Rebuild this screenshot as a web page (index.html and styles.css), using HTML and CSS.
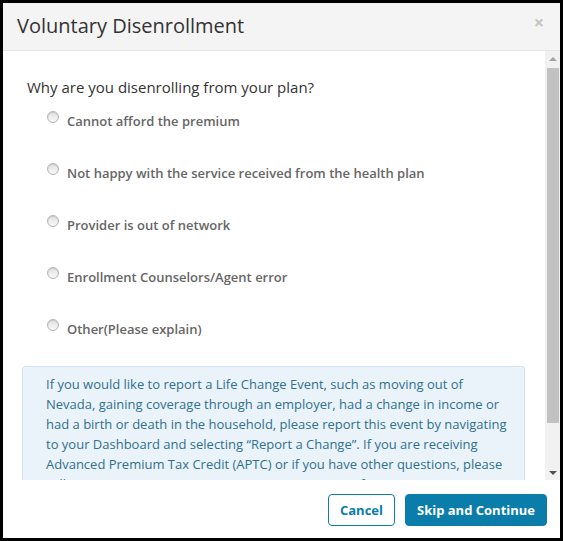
FILE: index.html
```html
<!DOCTYPE html>
<html>
<head>
<meta charset="utf-8">
<link rel="stylesheet" href="styles.css">
</head>
<body>
<div class="modal">
  <div class="modal-header">
    <h2 class="modal-title">Voluntary Disenrollment</h2>
    <span class="close">&times;</span>
  </div>
  <div class="modal-scroll">
    <div class="modal-body">
      <p class="question">Why are you disenrolling from your plan?</p>
      <ul class="options">
        <li><label><input type="radio" name="reason"><span>Cannot afford the premium</span></label></li>
        <li><label><input type="radio" name="reason"><span>Not happy with the service received from the health plan</span></label></li>
        <li><label><input type="radio" name="reason"><span>Provider is out of network</span></label></li>
        <li><label><input type="radio" name="reason"><span>Enrollment Counselors/Agent error</span></label></li>
        <li><label><input type="radio" name="reason"><span>Other(Please explain)</span></label></li>
      </ul>
      <div class="info">
        If you would like to report a Life Change Event, such as moving out of Nevada, gaining coverage through an employer, had a change in income or had a birth or death in the household, please report this event by navigating to your Dashboard and selecting “Report a Change”. If you are receiving Advanced Premium Tax Credit (APTC) or if you have other questions, please call our Customer Service Center at 1-800-547-2927 for assistance.
      </div>
    </div>
    <div class="scrollbar" aria-hidden="true">
      <div class="sb-btn"><span class="tri-up"></span></div>
      <div class="sb-track"><div class="sb-thumb"></div></div>
      <div class="sb-btn"><span class="tri-down"></span></div>
    </div>
  </div>
  <div class="modal-footer">
    <button class="btn btn-cancel">Cancel</button>
    <button class="btn btn-primary">Skip and Continue</button>
  </div>
</div>
</body>
</html>
```
FILE: styles.css
```css
html, body {
  margin: 0;
  padding: 0;
}
body {
  background: #000;
  padding: 3px;
  width: 563px;
  height: 541px;
  box-sizing: border-box;
  font-family: "Open Sans", "Noto Sans", sans-serif;
}
.modal {
  background: #fff;
  width: 557px;
  height: 535px;
  display: flex;
  flex-direction: column;
  overflow: hidden;
}
.modal-header {
  height: 47px;
  flex: none;
  background: #f4f4f4;
  border-bottom: 1px solid #e5e5e5;
  display: flex;
  align-items: center;
  justify-content: space-between;
  padding: 0 16px 0 14px;
}
.modal-title {
  margin: 0;
  font-size: 20px;
  font-weight: 400;
  color: #333;
  padding-bottom: 2px;
}
.close {
  color: #c4c4c4;
  font-size: 18px;
  font-weight: 700;
  align-self: flex-start;
  margin-top: 7px;
}
.modal-scroll {
  flex: 1;
  min-height: 0;
  display: flex;
}
.modal-body {
  flex: 1;
  overflow: hidden;
  padding: 0 20px 0 19px;
}
.question {
  margin: 25px 0 0 5px;
  font-size: 15px;
  line-height: 22px;
  color: #333;
}
.options {
  list-style: none;
  margin: 13px 0 0;
  padding: 0 0 0 25px;
}
.options li {
  height: 52px;
}
.options li:last-child {
  height: 45px;
}
.options label {
  display: flex;
  align-items: flex-start;
  font-size: 13px;
  font-weight: 600;
  color: #666;
  line-height: 20px;
}
.options input {
  appearance: none;
  -webkit-appearance: none;
  margin: 0 8px 0 0;
  width: 12px;
  height: 12px;
  border-radius: 50%;
  border: 1px solid #b5b5b5;
  background: linear-gradient(#e2e2e2, #f8f8f8);
  box-shadow: inset 0 1px 1px rgba(0,0,0,0.12);
  flex: none;
}
.info {
  margin: 2px 0 20px;
  background: #eaf3fa;
  border: 1px solid #d3e5f2;
  border-radius: 3px;
  padding: 7px 15px 14px 23px;
  color: #31708f;
  font-size: 13px;
  line-height: 20px;
}
.scrollbar {
  width: 15px;
  flex: none;
  background: #f1f1f1;
  display: flex;
  flex-direction: column;
}
.sb-btn {
  height: 15px;
  flex: none;
  display: flex;
  align-items: center;
  justify-content: center;
}
.tri-up {
  width: 0;
  height: 0;
  border-left: 4px solid transparent;
  border-right: 4px solid transparent;
  border-bottom: 4px solid #a3a3a3;
}
.tri-down {
  width: 0;
  height: 0;
  border-left: 4px solid transparent;
  border-right: 4px solid transparent;
  border-top: 4px solid #505050;
}
.sb-track {
  flex: 1;
  padding: 2px 1px 0 2px;
}
.sb-thumb {
  height: 355px;
  background: #c1c1c1;
}
.modal-footer {
  flex: none;
  height: 58px;
  display: flex;
  justify-content: flex-end;
  align-items: center;
  gap: 10px;
  padding: 0 13px 0 0;
  box-sizing: border-box;
}
.btn {
  height: 32px;
  border-radius: 4px;
  font-family: "Open Sans", "Noto Sans", sans-serif;
  font-size: 13px;
  font-weight: 700;
  padding: 0;
  white-space: nowrap;
  margin-top: 1px;
}
.btn-cancel {
  background: #fff;
  border: 1px solid #0b7dab;
  color: #0b7dab;
  width: 67px;
}
.btn-primary {
  background: #0b7dab;
  border: 1px solid #0b7dab;
  color: #fff;
  width: 142px;
}
```
